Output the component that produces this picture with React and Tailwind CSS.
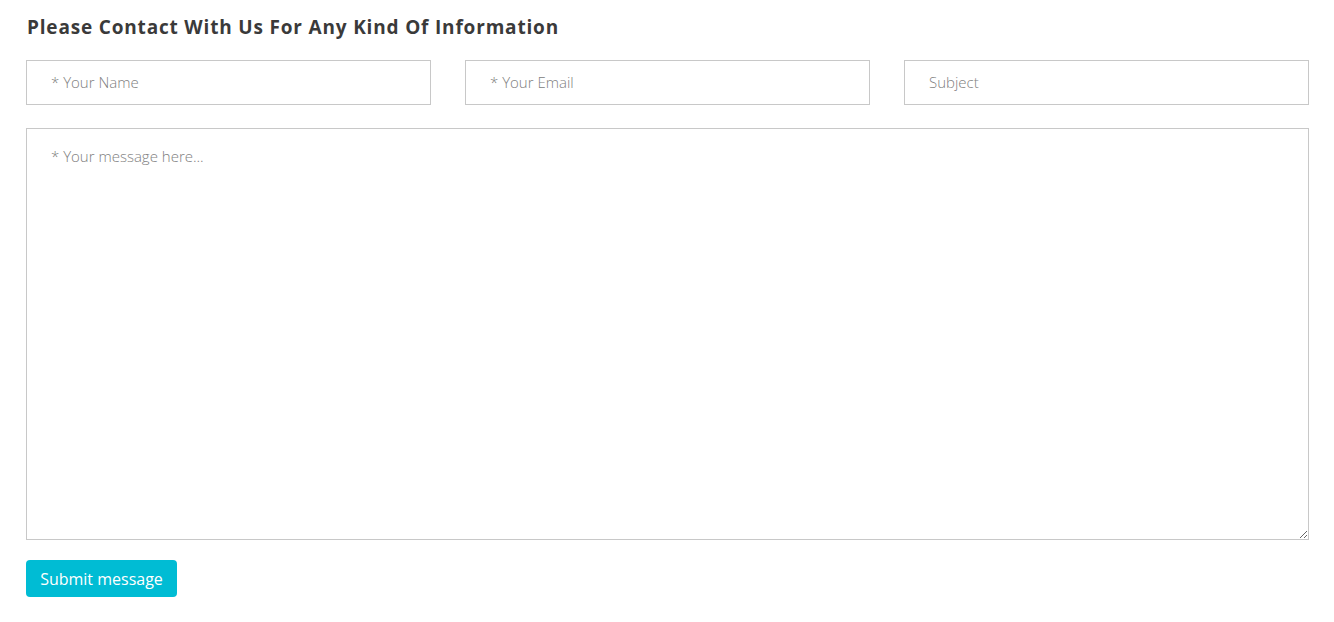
export default function App() {
  return (
    <div className="min-h-screen bg-white font-['Open_Sans',sans-serif]">
      <div className="pl-[26px] pr-[25px] pt-[14px]">
        <h2 className="text-[19px] font-bold text-[#3a3a3a] leading-[26px] tracking-[0.82px] pl-px">
          Please Contact With Us For Any Kind Of Information
        </h2>

        <form className="mt-[20px]" onSubmit={e => e.preventDefault()}>
          <div className="grid grid-cols-3 gap-[34px]">
            <input
              type="text"
              placeholder="* Your Name"
              className="h-[45px] border border-[#c8c8c8] pl-[24px] pr-6 pb-[2px] text-[15px] font-light text-[#555] placeholder:text-[#808080] outline-none"
            />
            <input
              type="email"
              placeholder="* Your Email"
              className="h-[45px] border border-[#c8c8c8] pl-[24px] pr-6 pb-[2px] text-[15px] font-light text-[#555] placeholder:text-[#808080] outline-none"
            />
            <input
              type="text"
              placeholder="Subject"
              className="h-[45px] border border-[#c8c8c8] pl-[24px] pr-6 pb-[2px] text-[15px] font-light text-[#555] placeholder:text-[#808080] outline-none"
            />
          </div>

          <textarea
            placeholder="* Your message here..."
            className="block w-full h-[412px] mt-[23px] border border-[#c8c8c8] pl-[24px] pr-6 pt-[16px] text-[15px] font-light text-[#555] placeholder:text-[#808080] outline-none"
          />

          <button
            type="submit"
            className="mt-[20px] h-[37px] w-[151px] rounded-[4px] bg-[#00bcd4] text-white text-[16px] leading-none"
          >
            Submit message
          </button>
        </form>
      </div>
    </div>
  )
}
